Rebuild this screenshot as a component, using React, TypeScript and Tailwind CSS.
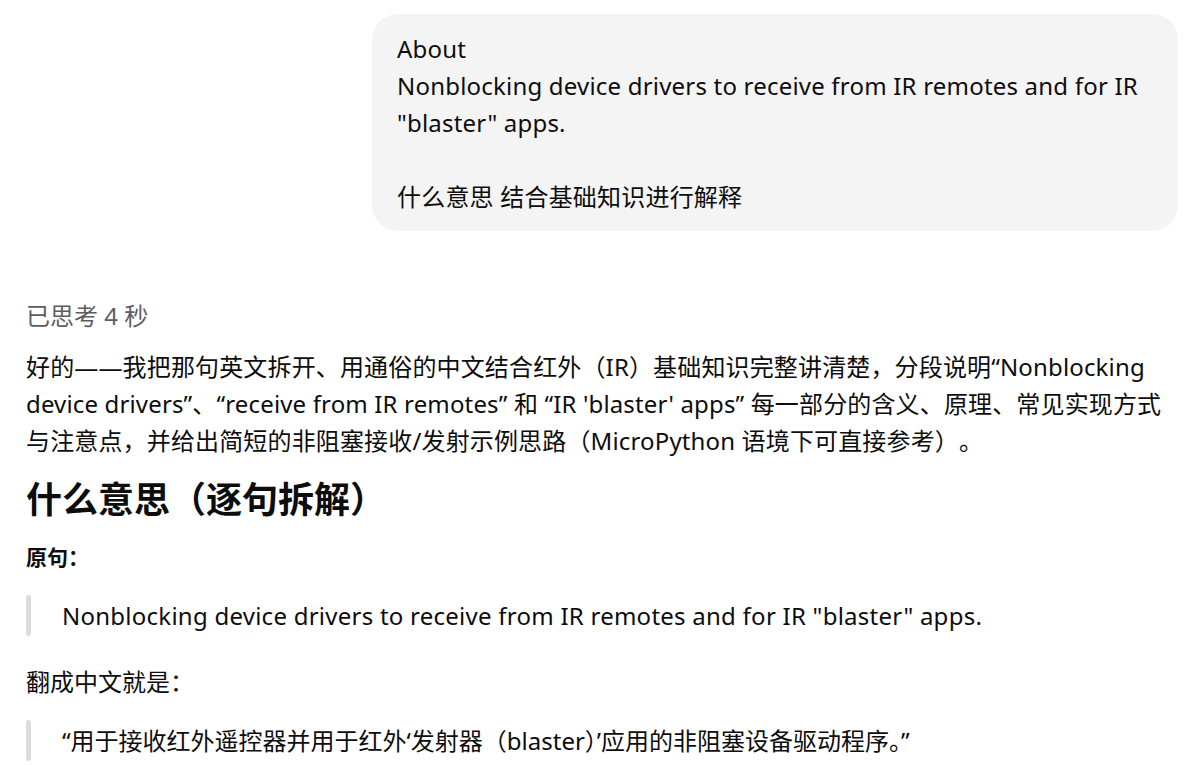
export default function App() {
  return (
    <div className="min-h-screen bg-white text-[#0d0d0d] font-['Noto_Sans','Noto_Sans_CJK_SC',sans-serif] [text-spacing-trim:space-all]">
      {/* user message */}
      <div className="flex justify-end pt-[14px] pr-[22px]">
        <div className="w-[806px] rounded-[26px] bg-[#f4f4f4] px-[25px] py-[16px] text-[24px] leading-[37px] tracking-[0.2px]">
          <p>About</p>
          <p>
            Nonblocking device drivers to receive from IR remotes and for IR
            <br />
            "blaster" apps.
          </p>
          <p className="h-[37px]" />
          <p>什么意思 结合基础知识进行解释</p>
        </div>
      </div>

      {/* assistant reply */}
      <div className="pl-[26px] pr-[25px]">
        <div className="mt-[71px] text-[24px] leading-[28px] text-[#5d5d5d]">已思考 4 秒</div>

        <p className="mt-[18px] text-[24px] leading-[37px] tracking-[0.15px]">
          好的——我把那句英文拆开、用通俗的中文结合红外（IR）基础知识完整讲清楚，分段说明“Nonblocking
          <br />
          device drivers”、“receive from IR remotes” 和 “IR 'blaster' apps” 每一部分的含义、原理、常见实现方式
          <br />
          与注意点，并给出简短的非阻塞接收/发射示例思路（MicroPython 语境下可直接参考）。
        </p>

        <h2 className="mt-[19px] text-[36px] leading-[44px] font-bold">什么意思（逐句拆解）</h2>

        <p className="mt-[21px] text-[21px] leading-[28px] font-bold">原句：</p>

        <blockquote className="mt-[24px] flex">
          <div className="w-[5px] shrink-0 rounded-full bg-[#dcdcdc]" />
          <p className="py-[2px] pl-[31px] text-[24px] leading-[37px] tracking-[0.25px]">
            Nonblocking device drivers to receive from IR remotes and for IR "blaster" apps.
          </p>
        </blockquote>

        <p className="mt-[27px] text-[24px] leading-[37px]">翻成中文就是：</p>

        <blockquote className="mt-[20px] flex">
          <div className="w-[5px] shrink-0 rounded-full bg-[#dcdcdc]" />
          <p className="py-[2px] pl-[31px] text-[24px] leading-[37px] [text-spacing-trim:normal]">
            “用于接收红外遥控器并用于红外‘发射器（blaster）’应用的非阻塞设备驱动程序。”
          </p>
        </blockquote>
      </div>
    </div>
  );
}
